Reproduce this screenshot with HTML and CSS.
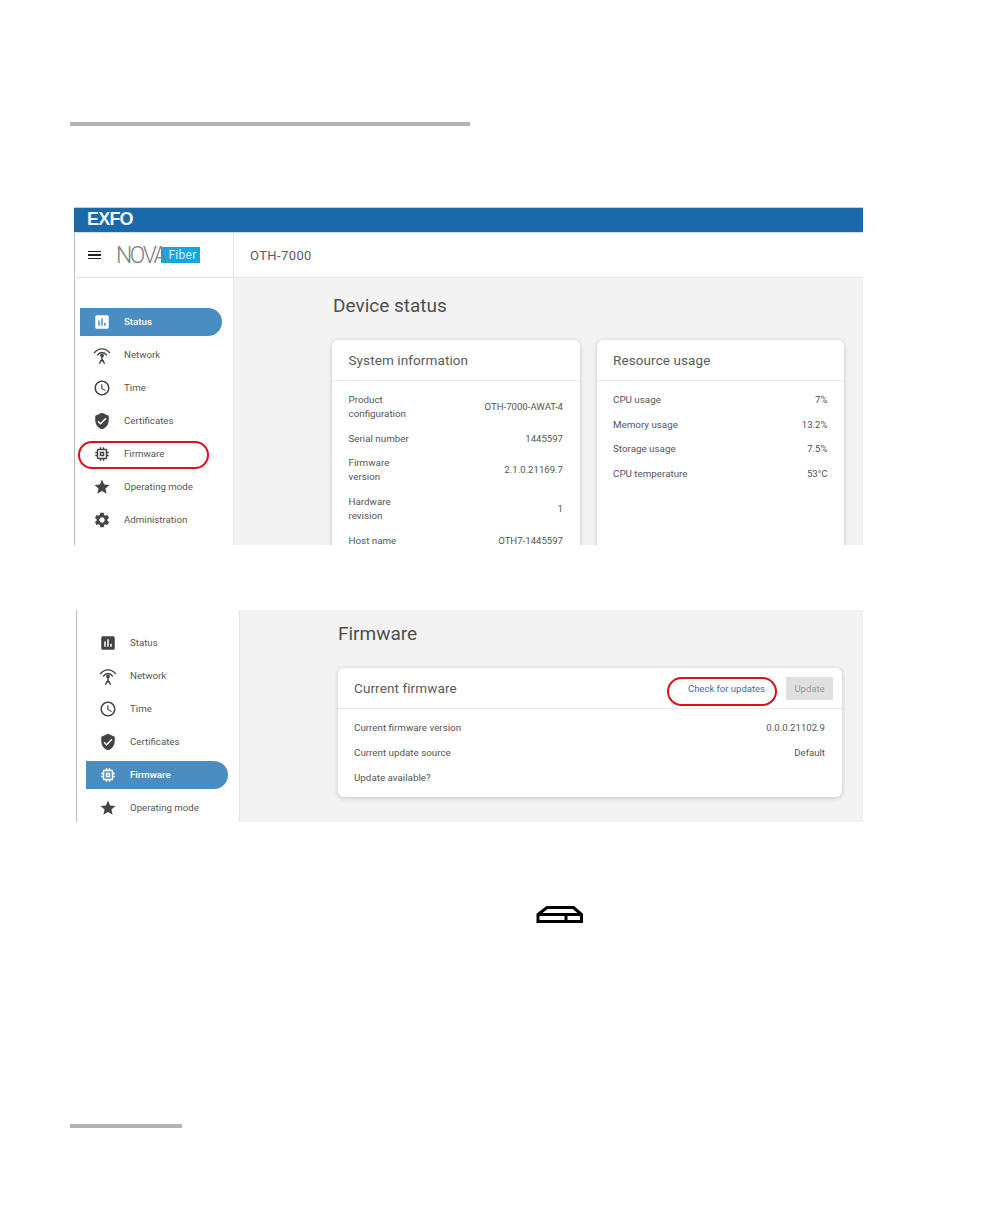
FILE: index.html
```html
<!DOCTYPE html>
<html lang="en">
<head>
<meta charset="utf-8">
<title>Firmware</title>
<link rel="stylesheet" href="styles.css">
</head>
<body>
<svg class="sprite" aria-hidden="true">
  <symbol id="i-status" viewBox="0 0 24 24"><path d="M19 3H5c-1.1 0-2 .9-2 2v14c0 1.1.9 2 2 2h14c1.1 0 2-.9 2-2V5c0-1.1-.9-2-2-2zM9 17H7v-7h2v7zm4 0h-2V7h2v10zm4 0h-2v-4h2v4z"/></symbol>
  <symbol id="i-network" viewBox="0 0 24 24"><g fill="none" stroke="currentColor" stroke-width="1.900"><path d="M1.500 9.500C7 2 17 2 22.500 9.500"/><path d="M5.500 12.500c3.800-5 9.200-5 13 0"/><path d="M12 13v5M8.500 23.500l3.500-5.500 3.500 5.500M9.500 19.500h5"/></g><circle cx="12" cy="12.500" r="2.500"/></symbol>
  <symbol id="i-time" viewBox="0 0 24 24"><path d="M11.990 2C6.470 2 2 6.480 2 12s4.470 10 9.990 10C17.520 22 22 17.520 22 12S17.520 2 11.990 2zM12 20c-4.420 0-8-3.580-8-8s3.580-8 8-8 8 3.580 8 8-3.580 8-8 8zm.5-13H11v6l5.250 3.150.75-1.230-4.500-2.670z"/></symbol>
  <symbol id="i-cert" viewBox="0 0 24 24"><path d="M12 1L3 5v6c0 5.550 3.840 10.740 9 12 5.160-1.260 9-6.450 9-12V5l-9-4zm-2 16l-4-4 1.410-1.410L10 14.170l6.590-6.590L18 9l-8 8z"/></symbol>
  <symbol id="i-firmware" viewBox="0 0 24 24"><path d="M15 9H9v6h6V9zm-2 4h-2v-2h2v2zm8-2V9h-2V7c0-1.100-.9-2-2-2h-2V3h-2v2h-2V3H9v2H7c-1.100 0-2 .9-2 2v2H3v2h2v2H3v2h2v2c0 1.100.9 2 2 2h2v2h2v-2h2v2h2v-2h2c1.100 0 2-.9 2-2v-2h2v-2h-2v-2h2zm-4 6H7V7h10v10z"/></symbol>
  <symbol id="i-mode" viewBox="0 0 24 24"><path d="M12 17.270L18.180 21l-1.640-7.030L22 9.240l-7.190-.61L12 2 9.190 8.630 2 9.240l5.460 4.730L5.820 21z"/></symbol>
  <symbol id="i-admin" viewBox="0 0 24 24"><path d="M19.140 12.940c.04-.3.060-.61.060-.94 0-.32-.02-.64-.07-.94l2.030-1.580c.18-.14.230-.41.120-.61l-1.920-3.320c-.12-.22-.37-.29-.59-.22l-2.390.96c-.5-.38-1.030-.7-1.620-.94l-.36-2.540c-.04-.24-.24-.41-.48-.41h-3.840c-.24 0-.43.170-.47.410l-.36 2.540c-.59.240-1.130.57-1.620.94l-2.390-.96c-.22-.08-.47 0-.59.220L2.740 8.870c-.12.210-.08.470.12.610l2.030 1.580c-.05.3-.09.630-.09.940s.02.640.07.940l-2.030 1.580c-.18.140-.23.410-.12.610l1.920 3.320c.12.220.37.290.59.220l2.390-.96c.5.380 1.030.7 1.620.94l.36 2.540c.05.240.24.410.48.410h3.840c.24 0 .44-.17.47-.41l.36-2.540c.59-.24 1.130-.56 1.620-.94l2.390.96c.22.080.47 0 .59-.22l1.920-3.320c.12-.22.070-.47-.12-.61l-2.010-1.580zM12 15.600c-1.980 0-3.600-1.620-3.600-3.600s1.620-3.600 3.600-3.600 3.600 1.620 3.600 3.600-1.620 3.600-3.600 3.600z"/></symbol>
</svg>

<div class="rule rule--top"></div>

<section class="shot shot--status">
  <div class="brand-bar"><span class="brand">EXFO</span></div>
  <div class="app-bar">
    <div class="logo-cell">
      <span class="burger"><i></i><i></i><i></i></span>
      <span class="nova">NOVA</span><span class="fiber">Fiber</span>
    </div>
    <div class="device">OTH-7000</div>
  </div>
  <div class="app-body">
    <nav class="sidenav">
      <a class="nav-item is-active"><svg class="nav-icon"><use href="#i-status"/></svg>Status</a>
      <a class="nav-item"><svg class="nav-icon"><use href="#i-network"/></svg>Network</a>
      <a class="nav-item"><svg class="nav-icon"><use href="#i-time"/></svg>Time</a>
      <a class="nav-item"><svg class="nav-icon"><use href="#i-cert"/></svg>Certificates</a>
      <a class="nav-item"><svg class="nav-icon"><use href="#i-firmware"/></svg>Firmware</a>
      <a class="nav-item"><svg class="nav-icon"><use href="#i-mode"/></svg>Operating mode</a>
      <a class="nav-item"><svg class="nav-icon"><use href="#i-admin"/></svg>Administration</a>
    </nav>
    <main class="content">
      <h1 class="page-title">Device status</h1>
      <div class="cards">
        <article class="card card--half">
          <header class="card-head"><h2 class="card-title">System information</h2></header>
          <div class="card-body">
            <div class="row"><span class="label label--narrow">Product configuration</span><span class="value">OTH-7000-AWAT-4</span></div>
            <div class="row"><span class="label label--narrow">Serial number</span><span class="value">1445597</span></div>
            <div class="row"><span class="label label--narrow">Firmware version</span><span class="value">2.1.0.21169.7</span></div>
            <div class="row"><span class="label label--narrow">Hardware revision</span><span class="value">1</span></div>
            <div class="row"><span class="label label--narrow">Host name</span><span class="value">OTH7-1445597</span></div>
          </div>
        </article>
        <article class="card card--half">
          <header class="card-head"><h2 class="card-title">Resource usage</h2></header>
          <div class="card-body">
            <div class="row"><span class="label">CPU usage</span><span class="value">7%</span></div>
            <div class="row"><span class="label">Memory usage</span><span class="value">13.2%</span></div>
            <div class="row"><span class="label">Storage usage</span><span class="value">7.5%</span></div>
            <div class="row"><span class="label">CPU temperature</span><span class="value">53°C</span></div>
          </div>
        </article>
      </div>
    </main>
  </div>
  <span class="callout callout--nav"></span>
</section>

<section class="shot shot--firmware">
  <div class="app-body">
    <nav class="sidenav">
      <a class="nav-item"><svg class="nav-icon"><use href="#i-status"/></svg>Status</a>
      <a class="nav-item"><svg class="nav-icon"><use href="#i-network"/></svg>Network</a>
      <a class="nav-item"><svg class="nav-icon"><use href="#i-time"/></svg>Time</a>
      <a class="nav-item"><svg class="nav-icon"><use href="#i-cert"/></svg>Certificates</a>
      <a class="nav-item is-active"><svg class="nav-icon"><use href="#i-firmware"/></svg>Firmware</a>
      <a class="nav-item"><svg class="nav-icon"><use href="#i-mode"/></svg>Operating mode</a>
    </nav>
    <main class="content">
      <h1 class="page-title">Firmware</h1>
      <article class="card card--wide">
        <header class="card-head card-head--actions">
          <h2 class="card-title">Current firmware</h2>
          <div class="actions">
            <a class="link-btn">Check for updates</a>
            <span class="btn-disabled">Update</span>
          </div>
        </header>
        <div class="card-body">
          <div class="row"><span class="label">Current firmware version</span><span class="value">0.0.0.21102.9</span></div>
          <div class="row"><span class="label">Current update source</span><span class="value">Default</span></div>
          <div class="row"><span class="label">Update available?</span></div>
        </div>
      </article>
    </main>
  </div>
  <span class="callout callout--check"></span>
</section>

<div class="device-icon">
  <svg width="50" height="18" viewBox="0 0 50 18"><path d="M3 8.500L12 1.500H38.500L46.500 8.500V15.500H3ZM3 8.500H46.500M31 8.500V15.500" fill="none" stroke="#000" stroke-width="3"/></svg>
</div>

<div class="rule rule--bottom"></div>
</body>
</html>
```
FILE: styles.css
```css
* { box-sizing: border-box; }
html, body { margin: 0; padding: 0; background: #fff; }
body { font-family: Roboto, "Liberation Sans", sans-serif; color: #555; height: 1224px; overflow: hidden; }
.sprite { display: none; }
.rule { height: 4px; background: #b3b3b3; margin-left: 70px; }
.rule--top { width: 400px; margin-top: 122px; }
.rule--bottom { width: 112px; margin-top: 200px; }

.shot { position: relative; overflow: hidden; }
.shot--status { margin: 81px 0 0 74px; width: 789px; height: 338px; display: flex; flex-direction: column; }
.shot--firmware { margin: 65px 0 0 76px; width: 787px; height: 212px; display: flex; flex-direction: column; }

.brand-bar { height: 26px; flex: none; background: #1a6aab; border-top: 1px solid #c5ced6; border-bottom: 1px solid #cfdce8; padding: 0 0 3px 13px; display: flex; align-items: center; }
.brand { font: bold 18px/1 "Liberation Sans", sans-serif; color: #eef4f9; letter-spacing: -.8px; }

.app-bar { height: 45px; flex: none; display: flex; border-bottom: 1px solid #e6e6e6; border-left: 1px solid #bbb; }
.logo-cell { width: 159px; flex: none; border-right: 1px solid #e6e6e6; display: flex; align-items: center; padding-left: 13px; }
.burger { width: 13px; display: flex; flex-direction: column; gap: 2px; margin-right: 15px; }
.burger i { display: block; height: 1.500px; background: #222; }
.nova { position: relative; z-index: 1; font-weight: 300; font-size: 23px; letter-spacing: -2.500px; color: #808080; line-height: 1; }
.fiber { background: #12a6e2; color: #d8f1fc; font-size: 12px; line-height: 16px; height: 16px; width: 39px; padding-left: 7px; margin-left: -4px; letter-spacing: .3px; }
.device { font-size: 13px; letter-spacing: .4px; padding-left: 16px; align-self: center; color: #5c5c5c; }

.app-body { flex: 1; min-height: 0; display: flex; border-left: 1px solid #bbb; }
.sidenav { flex: none; display: flex; flex-direction: column; gap: 5px; border-right: 1px solid #e6e6e6; background: #fff; }
.shot--status .sidenav { width: 159px; padding: 30px 0 0 5px; }
.shot--firmware .sidenav { width: 163px; padding: 19px 0 0 9px; }
.nav-item { width: 142px; height: 28px; flex: none; display: flex; align-items: center; padding: 0 0 2px 13px; font-size: 9.700px; color: #555; border-radius: 0 14px 14px 0; }
.nav-icon { width: 18px; height: 18px; margin: 2px 13px 0 0; flex: none; fill: #444; color: #444; }
.nav-item.is-active { background: #4a8dc2; color: #fff; font-weight: 500; }
.nav-item.is-active .nav-icon { fill: #fff; color: #fff; }

.content { flex: 1; min-width: 0; background: #f3f3f3; padding-left: 98px; }
.shot--status .content { padding-top: 16px; }
.shot--firmware .content { padding-top: 12px; }
.page-title { margin: 0 0 22px; font-size: 19px; line-height: 24px; font-weight: 400; color: #4f4f4f; }
.shot--status .page-title { padding-left: 1px; }

.cards { display: flex; gap: 17px; width: 512px; }
.card { background: #fff; border-radius: 6px; box-shadow: 0 1px 5px rgba(0,0,0,.2); }
.card--half { flex: 1; min-width: 0; min-height: 300px; }
.card--wide { width: 504px; height: 129px; }
.card-head { height: 41px; border-bottom: 1px solid #e8e8e8; padding: 0 16px; display: flex; align-items: center; }
.card--half .card-head { padding-left: 16.500px; }
.card-head--actions { justify-content: space-between; padding-right: 9px; }
.card-title { margin: 0; font-size: 13.500px; font-weight: 400; color: #5a5a5a; letter-spacing: .1px; }
.card-body { padding: 12px 17px 0 16px; display: flex; flex-direction: column; gap: 11px; }
.card--half .card-body { padding: 11.800px 16.500px 0; gap: 10.800px; }
.row { display: flex; justify-content: space-between; align-items: center; font-size: 9.800px; line-height: 14px; }
.label { color: #555; }
.label--narrow { width: 70px; }
.value { color: #555; font-size: 9.600px; }

.actions { display: flex; align-items: center; gap: 21px; }
.link-btn { font-size: 9.500px; color: #3c6ea8; }
.btn-disabled { width: 47px; height: 23px; background: #e0e0e0; color: #9a9a9a; font-size: 9.500px; display: flex; align-items: center; justify-content: center; }

.callout { position: absolute; border: 2px solid #e00f1e; border-radius: 16px; pointer-events: none; }
.callout--nav { left: 4px; top: 234px; width: 131px; height: 28px; }
.callout--check { left: 591px; top: 67px; width: 110px; height: 29px; }

.device-icon { margin: 84px 0 0 535px; height: 18px; line-height: 0; }
```
